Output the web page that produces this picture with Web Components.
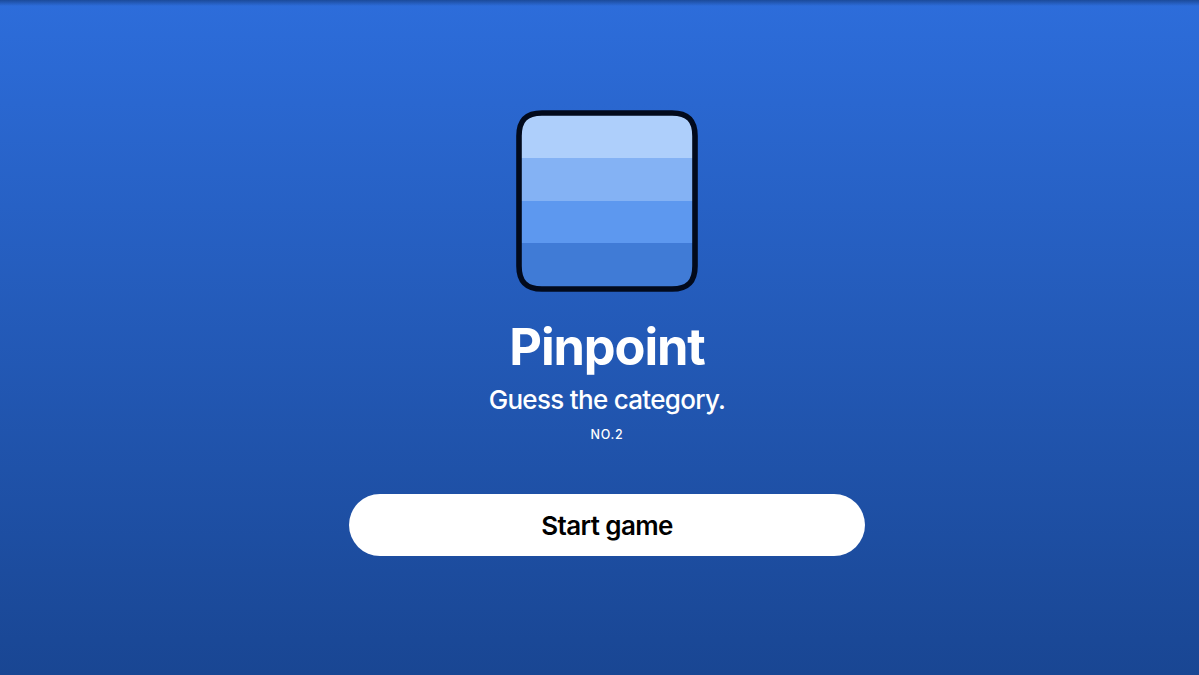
<!DOCTYPE html>
<html lang="en">
<head>
<meta charset="utf-8">
<title>Pinpoint</title>
<style>
    html, body {
        margin: 0;
        height: 100%;
    }

    body {
        font-family: Inter, "Liberation Sans", sans-serif;
        overflow: hidden;
    }
</style>
</head>
<body>
<game-launch>
    <pinpoint-icon slot="icon"></pinpoint-icon>
    <span slot="title">Pinpoint</span>
    <span slot="tagline">Guess the category.</span>
    <span slot="number">NO.2</span>
    <pill-button slot="action">Start game</pill-button>
</game-launch>

<script>
(function () {

    const iconTemplate = document.createElement('template');

    iconTemplate.innerHTML = `
        <style>
            :host {
                display: block;
                width: 182px;
                height: 182px;
            }

            svg {
                display: block;
            }
        </style>
        <svg width="182" height="182" viewBox="0 0 182 182" aria-hidden="true">
            <defs>
                <clipPath id="tile">
                    <path d="M26 3H156C172 3 179 10 179 26V156C179 172 172 179 156 179H26C10 179 3 172 3 156V26C3 10 10 3 26 3Z"/>
                </clipPath>
            </defs>
            <g clip-path="url(#tile)">
                <rect width="182" height="48" fill="#aecffb"/>
                <rect y="48" width="182" height="43" fill="#84b2f4"/>
                <rect y="91" width="182" height="42.5" fill="#5d98ef"/>
                <rect y="133.5" width="182" height="48.5" fill="#407bd6"/>
            </g>
            <path fill="none" stroke="#020a1c" stroke-width="5.6" d="M26 3H156C172 3 179 10 179 26V156C179 172 172 179 156 179H26C10 179 3 172 3 156V26C3 10 10 3 26 3Z"/>
        </svg>
    `;

    class PinpointIcon extends HTMLElement {
        constructor() {
            super();
            this.attachShadow({ mode: 'open' });
            this.shadowRoot.appendChild(iconTemplate.content.cloneNode(true));
        }
    }

    const buttonTemplate = document.createElement('template');

    buttonTemplate.innerHTML = `
        <style>
            :host {
                display: block;
                width: 516.5px;
            }

            button {
                display: block;
                width: 100%;
                height: 62px;
                padding: 1px 0 0;
                border: 0;
                border-radius: 31px;
                background: #fff;
                color: #000;
                font-family: inherit;
                font-size: 26px;
                font-weight: 600;
                letter-spacing: -0.6px;
                cursor: pointer;
            }

            button:focus-visible {
                outline: 2px solid #fff;
                outline-offset: 3px;
            }
        </style>
        <button type="button"><slot></slot></button>
    `;

    class PillButton extends HTMLElement {
        constructor() {
            super();
            this.attachShadow({ mode: 'open' });
            this.shadowRoot.appendChild(buttonTemplate.content.cloneNode(true));
        }
    }

    const launchTemplate = document.createElement('template');

    launchTemplate.innerHTML = `
        <style>
            :host {
                display: flex;
                flex-direction: column;
                align-items: center;
                height: 100%;
                padding: 110px 0 0 15px;
                box-sizing: border-box;
                color: #fff;
                background:
                    linear-gradient(rgba(10, 40, 90, 0.5), rgba(10, 40, 90, 0) 6px),
                    linear-gradient(#2d6ddb, #194693);
            }

            h1, p {
                margin: 0;
                white-space: nowrap;
            }

            h1 {
                margin-top: 24px;
                font-size: 50.5px;
                line-height: 62px;
                font-weight: 650;
                letter-spacing: -1.1px;
            }

            .tagline {
                margin-top: 4px;
                font-size: 26px;
                line-height: 36px;
                letter-spacing: -0.7px;
                font-weight: 450;
            }

            .number {
                margin-top: 7px;
                font-size: 12.5px;
                line-height: 20px;
                font-weight: 500;
                letter-spacing: 0.7px;
            }

            .action {
                margin-top: 49px;
            }
        </style>
        <slot name="icon"></slot>
        <h1><slot name="title"></slot></h1>
        <p class="tagline"><slot name="tagline"></slot></p>
        <p class="number"><slot name="number"></slot></p>
        <div class="action"><slot name="action"></slot></div>
    `;

    class GameLaunch extends HTMLElement {
        constructor() {
            super();
            this.attachShadow({ mode: 'open' });
            this.shadowRoot.appendChild(launchTemplate.content.cloneNode(true));
        }
    }

    window.customElements.define('pinpoint-icon', PinpointIcon);
    window.customElements.define('pill-button', PillButton);
    window.customElements.define('game-launch', GameLaunch);

})();
</script>
</body>
</html>
